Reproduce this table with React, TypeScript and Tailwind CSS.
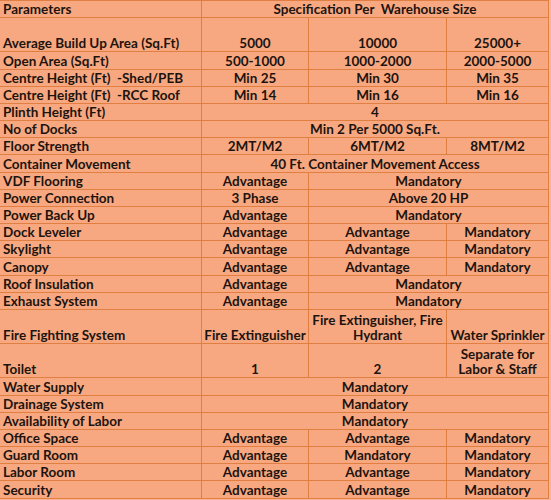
import * as React from "react"

type Cell = { text: string; span?: number }
type Row = { label: string; cells: Cell[]; tall?: boolean }

const rows: Row[] = [
  { label: "Average Build Up Area (Sq.Ft)", tall: true, cells: [{ text: "5000" }, { text: "10000" }, { text: "25000+" }] },
  { label: "Open Area (Sq.Ft)", cells: [{ text: "500-1000" }, { text: "1000-2000" }, { text: "2000-5000" }] },
  { label: "Centre Height (Ft)  -Shed/PEB", cells: [{ text: "Min 25" }, { text: "Min 30" }, { text: "Min 35" }] },
  { label: "Centre Height (Ft)  -RCC Roof", cells: [{ text: "Min 14" }, { text: "Min 16" }, { text: "Min 16" }] },
  { label: "Plinth Height (Ft)", cells: [{ text: "4", span: 3 }] },
  { label: "No of Docks", cells: [{ text: "Min 2 Per 5000 Sq.Ft.", span: 3 }] },
  { label: "Floor Strength", cells: [{ text: "2MT/M2" }, { text: "6MT/M2" }, { text: "8MT/M2" }] },
  { label: "Container Movement", cells: [{ text: "40 Ft. Container Movement Access", span: 3 }] },
  { label: "VDF Flooring", cells: [{ text: "Advantage" }, { text: "Mandatory", span: 2 }] },
  { label: "Power Connection", cells: [{ text: "3 Phase" }, { text: "Above 20 HP", span: 2 }] },
  { label: "Power Back Up", cells: [{ text: "Advantage" }, { text: "Mandatory", span: 2 }] },
  { label: "Dock Leveler", cells: [{ text: "Advantage" }, { text: "Advantage" }, { text: "Mandatory" }] },
  { label: "Skylight", cells: [{ text: "Advantage" }, { text: "Advantage" }, { text: "Mandatory" }] },
  { label: "Canopy", cells: [{ text: "Advantage" }, { text: "Advantage" }, { text: "Mandatory" }] },
  { label: "Roof Insulation", cells: [{ text: "Advantage" }, { text: "Mandatory", span: 2 }] },
  { label: "Exhaust System", cells: [{ text: "Advantage" }, { text: "Mandatory", span: 2 }] },
  { label: "Fire Fighting System", tall: true, cells: [{ text: "Fire Extinguisher" }, { text: "Fire Extinguisher, Fire Hydrant" }, { text: "Water Sprinkler" }] },
  { label: "Toilet", tall: true, cells: [{ text: "1" }, { text: "2" }, { text: "Separate for Labor & Staff" }] },
  { label: "Water Supply", cells: [{ text: "Mandatory", span: 3 }] },
  { label: "Drainage System", cells: [{ text: "Mandatory", span: 3 }] },
  { label: "Availability of Labor", cells: [{ text: "Mandatory", span: 3 }] },
  { label: "Office Space", cells: [{ text: "Advantage" }, { text: "Advantage" }, { text: "Mandatory" }] },
  { label: "Guard Room", cells: [{ text: "Advantage" }, { text: "Mandatory" }, { text: "Mandatory" }] },
  { label: "Labor Room", cells: [{ text: "Advantage" }, { text: "Advantage" }, { text: "Mandatory" }] },
  { label: "Security", cells: [{ text: "Advantage" }, { text: "Advantage" }, { text: "Mandatory" }] },
]

function spanClass(span?: number) {
  if (span === 3) return "col-span-3"
  if (span === 2) return "col-span-2"
  return ""
}

export default function App() {
  return (
    <div className="w-[551px] h-[500px] bg-[#f9b594] font-['Lato',sans-serif] font-bold text-[13.5px] leading-[15px] text-[#1d140e]">
      <div className="grid w-[549px] grid-cols-[201px_106px_137px_101px] gap-px border-t border-r border-b border-[#df7f42] bg-[#df7f42]">
        {/* header */}
        <div className="h-[16.17px] bg-[#f8a881] flex items-end pl-[3px]">Parameters</div>
        <div className="col-span-3 h-[16.17px] bg-[#f8a881] flex items-end justify-center whitespace-pre">
          Specification Per  Warehouse Size
        </div>

        {rows.map((r) => {
          const h = r.tall ? "h-[33.34px]" : "h-[16.17px]"
          return (
            <React.Fragment key={r.label}>
              <div className={`${h} bg-[#f8a881] flex items-end pl-[3px] whitespace-pre`}>{r.label}</div>
              {r.cells.map((c, i) => (
                <div
                  key={i}
                  className={`${h} ${spanClass(c.span)} bg-[#f8a881] flex items-end justify-center text-center px-[1px]`}
                >
                  {c.text}
                </div>
              ))}
            </React.Fragment>
          )
        })}
      </div>
    </div>
  )
}
